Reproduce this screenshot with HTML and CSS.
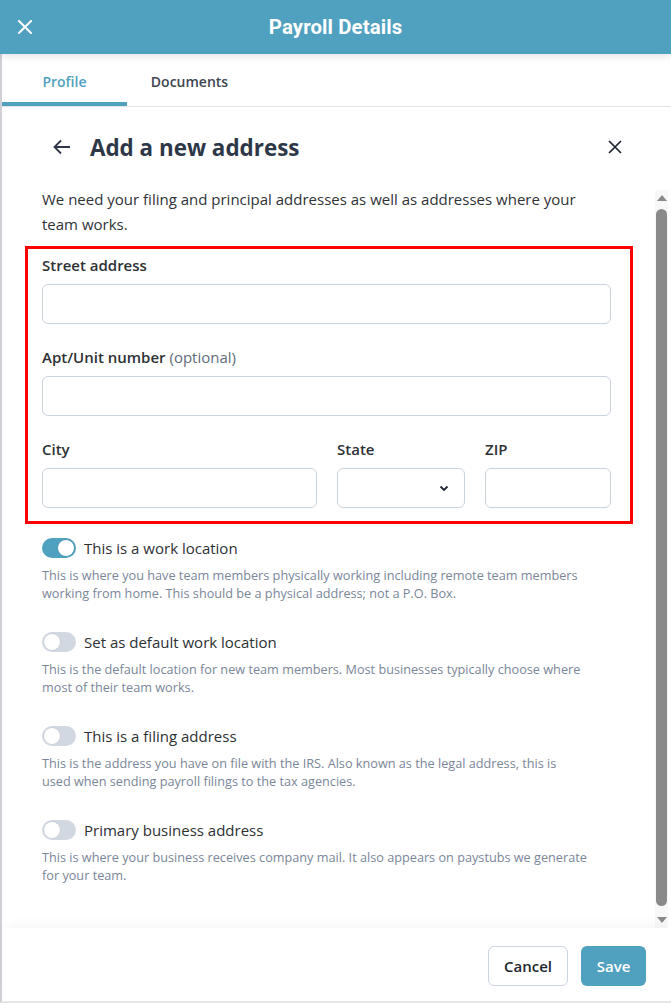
FILE: index.html
```html
<!DOCTYPE html>
<html lang="en">
<head>
<meta charset="utf-8">
<title>Payroll Details</title>
<link rel="stylesheet" href="styles.css">
</head>
<body>
<div class="panel">
  <header class="topbar">
    <button class="topbar-close" aria-label="Close">
      <svg width="14" height="14" viewBox="0 0 14 14"><path d="M1 1L13 13M13 1L1 13" stroke="#fff" stroke-width="2" stroke-linecap="square"/></svg>
    </button>
    <h1 class="topbar-title">Payroll Details</h1>
  </header>
  <div class="main">
    <nav class="tabs">
      <div class="tab tab-active">Profile</div>
      <div class="tab">Documents</div>
    </nav>
    <div class="page-head">
      <button class="icon-btn back" aria-label="Back">
        <svg width="18" height="16" viewBox="0 0 18 16"><path d="M17 8H2M8 1.5L1.5 8L8 14.5" fill="none" stroke="#2d3748" stroke-width="1.8" stroke-linejoin="miter"/></svg>
      </button>
      <h2 class="page-title">Add a new address</h2>
      <button class="icon-btn close" aria-label="Close">
        <svg width="14" height="14" viewBox="0 0 14 14"><path d="M1 1L13 13M13 1L1 13" stroke="#1f2530" stroke-width="1.7"/></svg>
      </button>
    </div>
    <div class="scroll-area">
      <div class="content">
        <p class="intro">We need your filing and principal addresses as well as addresses where your team works.</p>
        <div class="highlight">
          <div class="field">
            <label class="label">Street address</label>
            <div class="input"></div>
          </div>
          <div class="field field-gap">
            <label class="label">Apt/Unit number <span class="optional">(optional)</span></label>
            <div class="input"></div>
          </div>
          <div class="field-row">
            <div class="field city">
              <label class="label">City</label>
              <div class="input"></div>
            </div>
            <div class="field state">
              <label class="label">State</label>
              <div class="input select">
                <svg width="10" height="7" viewBox="0 0 10 7"><path d="M1.5 1.5L5 5L8.5 1.5" fill="none" stroke="#1f2530" stroke-width="1.8"/></svg>
              </div>
            </div>
            <div class="field zip">
              <label class="label">ZIP</label>
              <div class="input"></div>
            </div>
          </div>
        </div>
        <div class="option">
          <div class="option-row">
            <span class="toggle on"><span class="knob"></span></span>
            <span class="option-label">This is a work location</span>
          </div>
          <p class="option-desc">This is where you have team members physically working including remote team members<br>working from home. This should be a physical address; not a P.O. Box.</p>
        </div>
        <div class="option">
          <div class="option-row">
            <span class="toggle"><span class="knob"></span></span>
            <span class="option-label">Set as default work location</span>
          </div>
          <p class="option-desc">This is the default location for new team members. Most businesses typically choose where<br>most of their team works.</p>
        </div>
        <div class="option">
          <div class="option-row">
            <span class="toggle"><span class="knob"></span></span>
            <span class="option-label">This is a filing address</span>
          </div>
          <p class="option-desc">This is the address you have on file with the IRS. Also known as the legal address, this is<br>used when sending payroll filings to the tax agencies.</p>
        </div>
        <div class="option">
          <div class="option-row">
            <span class="toggle"><span class="knob"></span></span>
            <span class="option-label">Primary business address</span>
          </div>
          <p class="option-desc">This is where your business receives company mail. It also appears on paystubs we generate<br>for your team.</p>
        </div>
      </div>
      <div class="scrollbar">
        <span class="sb-arrow up"></span>
        <span class="sb-thumb"></span>
        <span class="sb-arrow down"></span>
      </div>
    </div>
    <footer class="footer">
      <button class="btn btn-secondary">Cancel</button>
      <button class="btn btn-primary">Save</button>
    </footer>
  </div>
</div>
</body>
</html>
```
FILE: styles.css
```css
* { box-sizing: border-box; }
html, body { margin: 0; padding: 0; }
body {
  font-family: "Open Sans", "Noto Sans", sans-serif;
  color: #2d3748;
  background: #fff;
  width: 671px;
  height: 1003px;
  overflow: hidden;
}
button { font-family: inherit; border: none; background: none; padding: 0; cursor: pointer; }
p { margin: 0; }

.panel {
  display: flex;
  flex-direction: column;
  height: 1003px;
}

.topbar {
  position: relative;
  z-index: 2;
  height: 54px;
  flex: none;
  background: #50a0c0;
  display: flex;
  align-items: center;
  justify-content: center;
  box-shadow: 0 2px 8px rgba(0, 0, 0, 0.12);
}
.topbar-close {
  position: absolute;
  left: 18px;
  top: 20px;
  width: 14px;
  height: 14px;
  display: flex;
}
.topbar-title {
  margin: 0;
  font-family: Roboto, "Open Sans", sans-serif;
  font-weight: 700;
  font-size: 20.4px;
  color: #fff;
  letter-spacing: 0.1px;
}

.main {
  flex: 1;
  display: flex;
  flex-direction: column;
  border-left: 2px solid #cfcfd5;
  border-bottom: 2px solid #e6e6e8;
  min-height: 0;
}

.tabs {
  display: flex;
  height: 53px;
  flex: none;
  border-bottom: 1px solid #e3e3e6;
}
.tab {
  width: 125px;
  display: flex;
  align-items: center;
  justify-content: center;
  font-family: "Open Sans", sans-serif;
  font-weight: 600;
  font-size: 14px;
  color: #3d4650;
  border-bottom: 4px solid transparent;
  padding-top: 7px;
}
.tab-active {
  color: #50a0c0;
  border-bottom-color: #50a0c0;
}

.page-head {
  flex: none;
  height: 80px;
  display: flex;
  align-items: center;
  padding: 0 48px 0 50px;
}
.icon-btn { display: flex; align-items: center; justify-content: center; }
.back { width: 20px; margin-right: 18px; }
.page-title {
  flex: 1;
  margin: 0;
  font-size: 22.4px;
  font-weight: 700;
  color: #2d3748;
}
.close { width: 16px; }

.scroll-area {
  flex: 1;
  min-height: 0;
  display: flex;
}
.content {
  flex: 1;
  padding: 0 0 0 40px;
  overflow: hidden;
}
.intro {
  width: 569px;
  font-size: 15px;
  line-height: 25px;
  color: #2f3336;
}

.highlight {
  width: 608px;
  margin: 9px 0 0 -17px;
  border: 3px solid #ff0000;
  padding: 5px 19px 13px 14px;
}
.field-gap { margin-top: 22px; }
.field-row {
  display: flex;
  gap: 20px;
  margin-top: 22px;
}
.city { flex: none; width: 275px; }
.state { flex: none; width: 128px; }
.zip { flex: 1; }
.label {
  display: block;
  font-size: 15px;
  line-height: 22px;
  font-weight: 600;
  color: #2d3134;
  margin-bottom: 8px;
}
.optional { font-weight: 400; color: #5f6b7a; }
.input {
  height: 40px;
  border: 1px solid #cbd3df;
  border-radius: 6px;
  background: #fff;
}
.select {
  display: flex;
  align-items: center;
  justify-content: flex-end;
  padding-right: 15px;
}

.option { margin-top: 13px; }
.option + .option { margin-top: 29px; }
.option-row {
  display: flex;
  align-items: center;
  height: 22px;
}
.toggle {
  width: 34px;
  height: 20px;
  border-radius: 10px;
  background: #d2d8e1;
  position: relative;
  margin-right: 8px;
  flex: none;
}
.toggle .knob {
  position: absolute;
  top: 2px;
  left: 2px;
  width: 16px;
  height: 16px;
  border-radius: 50%;
  background: #fff;
  box-shadow: 0 0 0 0.5px rgba(0, 0, 0, 0.08);
}
.toggle.on { background: #50a0c0; }
.toggle.on .knob { left: 16px; }
.option-label {
  font-size: 15px;
  color: #2d3134;
}
.option-desc {
  margin-top: 7px;
  width: 600px;
  font-size: 12.7px;
  line-height: 18px;
  color: #7a8699;
}

.scrollbar {
  flex: none;
  width: 13px;
  margin: 3px 3px 0 0;
  background: #f8f8f8;
  display: flex;
  flex-direction: column;
  align-items: center;
}
.sb-arrow {
  width: 0;
  height: 0;
  border-left: 5px solid transparent;
  border-right: 5px solid transparent;
  margin: 5px 0;
}
.sb-arrow.up { border-bottom: 6px solid #8a8a8a; }
.sb-arrow.down { border-top: 6px solid #8a8a8a; }
.sb-thumb {
  flex: 1;
  width: 11px;
  border-radius: 6px;
  background: #8a8a8a;
  margin: 3px 0 6px;
}

.footer {
  flex: none;
  height: 73px;
  display: flex;
  justify-content: flex-end;
  align-items: flex-start;
  gap: 13px;
  padding: 18px 25px 0 0;
  background: #fff;
  box-shadow: 0 -8px 12px -6px rgba(0, 0, 0, 0.05);
  position: relative;
}
.btn {
  height: 40px;
  border-radius: 6px;
  font-size: 15px;
  font-weight: 600;
}
.btn-secondary {
  width: 80px;
  border: 1px solid #ccd4e0;
  color: #22262b;
  background: #fff;
}
.btn-primary {
  width: 65px;
  background: #50a0c0;
  color: #fff;
}
```
